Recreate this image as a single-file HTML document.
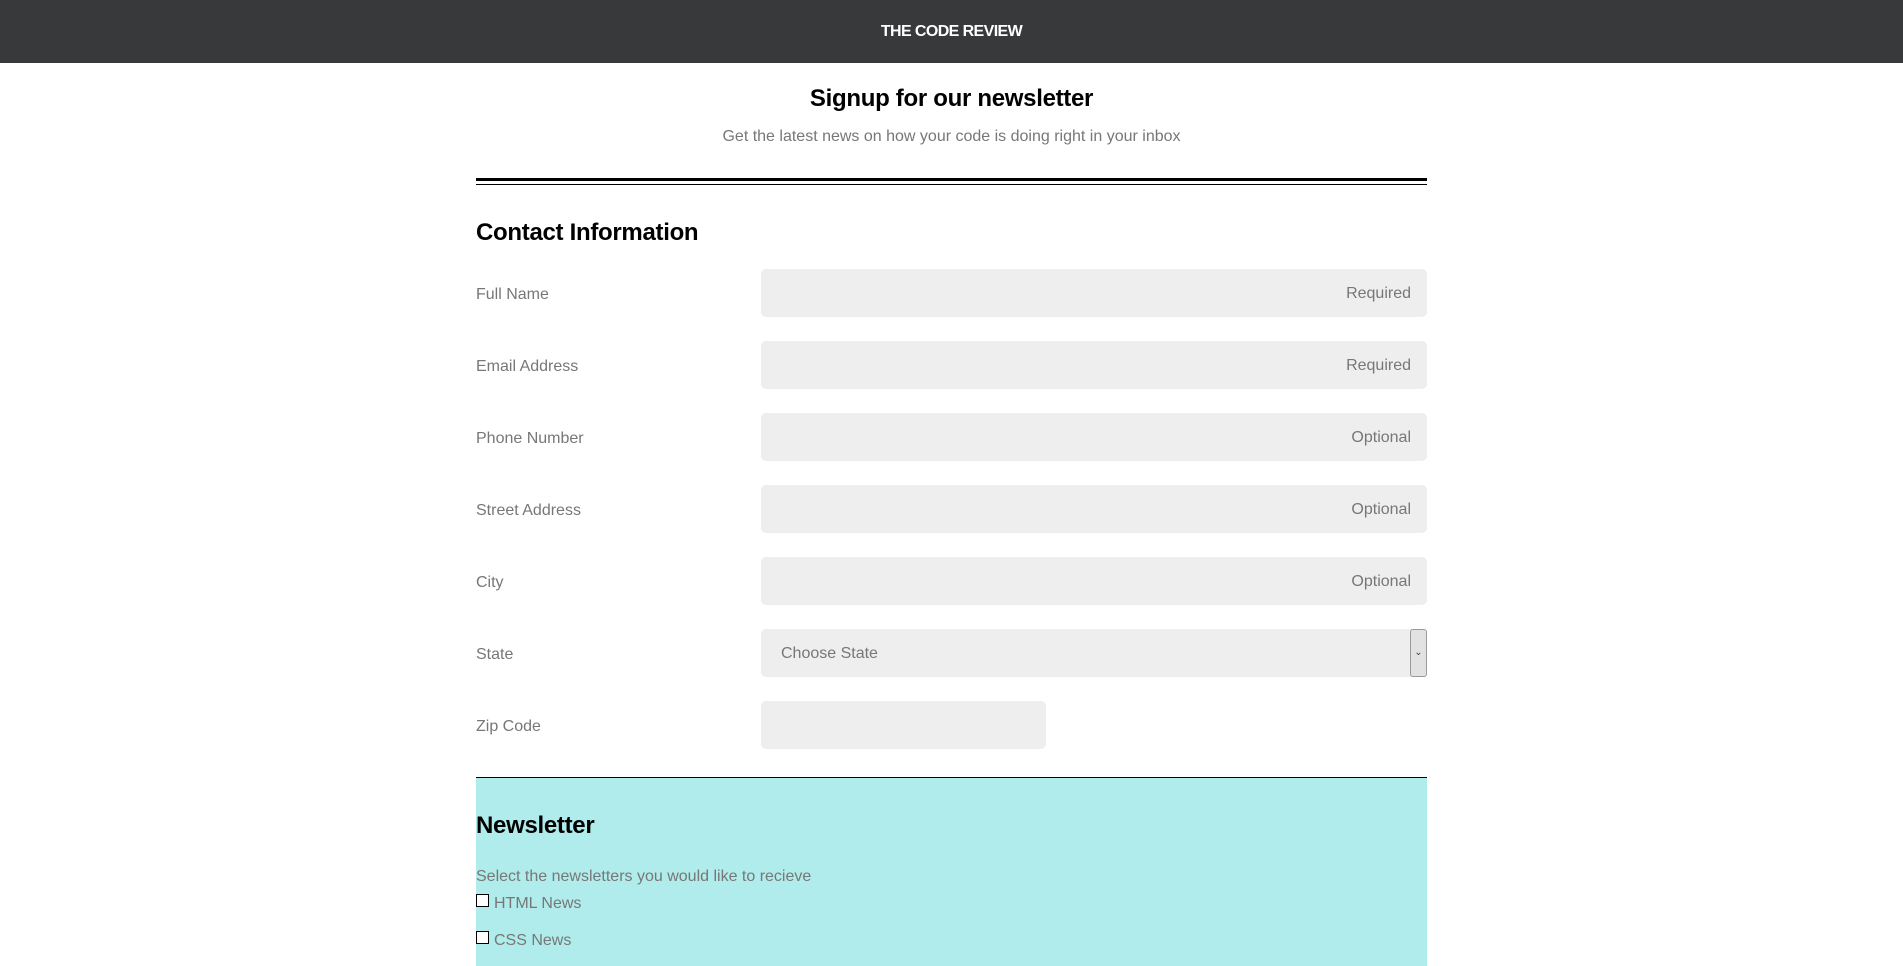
<!DOCTYPE html>
<html><head><meta charset="utf-8"><style>
*{box-sizing:border-box;margin:0;padding:0}
html,body{width:1903px;height:966px;overflow:hidden}
body{background:#fff;font-family:"Liberation Sans",Arial,sans-serif;position:relative}
.hdr{height:63px;background:#38393b;color:#fff;text-align:center;font-weight:bold;font-size:16px;line-height:63px;letter-spacing:-0.6px}
.wrap{position:absolute;left:476px;width:951px;top:63px;height:903px;overflow:hidden}
h1{position:absolute;left:0;width:951px;text-align:center;top:22px;font-size:24px;font-weight:bold;color:#000;letter-spacing:-0.3px}
.sub{position:absolute;left:0;width:951px;text-align:center;top:65px;font-size:16px;color:#777}
.l1{position:absolute;left:0;width:951px;top:115px;height:3px;background:#000}
.l2{position:absolute;left:0;width:951px;top:121px;height:1px;background:#000}
h2{position:absolute;left:0;font-size:24px;font-weight:bold;color:#000;letter-spacing:-0.3px}
.lab{position:absolute;left:0;font-size:16px;color:#777}
.inp{position:absolute;left:285px;width:666px;height:48px;background:#eee;border-radius:5px;font-size:16px;color:#777;text-align:right;padding-right:16px;line-height:50px}
.sel{text-align:left;padding-left:20px}
.dd{position:absolute;right:0;top:0;width:17px;height:48px;background:#e2e2e2;border:1px solid #999;border-radius:3px;font-size:10px;line-height:46px;text-align:center;color:#444}
.hr{position:absolute;left:0;width:951px;top:714px;height:1px;background:#000}
.cy{position:absolute;left:0;width:951px;top:715px;height:188px;background:#afeceb}
.cb{position:absolute;left:0;width:13px;height:13px;border:1px solid #000;background:#fff}
</style></head><body>
<div class="hdr">THE CODE REVIEW</div>
<div class="wrap">
<h1>Signup for our newsletter</h1>
<div class="sub">Get the latest news on how your code is doing right in your inbox</div>
<div class="l1"></div><div class="l2"></div>
<h2 style="top:156px">Contact Information</h2>
<div class="lab" style="top:223px">Full Name</div><div class="inp" style="top:206px">Required</div>
<div class="lab" style="top:295px">Email Address</div><div class="inp" style="top:278px">Required</div>
<div class="lab" style="top:367px">Phone Number</div><div class="inp" style="top:350px">Optional</div>
<div class="lab" style="top:439px">Street Address</div><div class="inp" style="top:422px">Optional</div>
<div class="lab" style="top:511px">City</div><div class="inp" style="top:494px">Optional</div>
<div class="lab" style="top:583px">State</div><div class="inp sel" style="top:566px">Choose State<div class="dd">&#8964;</div></div>
<div class="lab" style="top:655px">Zip Code</div><div class="inp" style="top:638px;width:285px"></div>
<div class="hr"></div>
<div class="cy">
<h2 style="top:34px">Newsletter</h2>
<div class="lab" style="top:90px">Select the newsletters you would like to recieve</div>
<div class="cb" style="top:116px"></div><div class="lab" style="top:117px;left:18px">HTML News</div>
<div class="cb" style="top:153px"></div><div class="lab" style="top:154px;left:18px">CSS News</div>
</div>
</div>
</body></html>
